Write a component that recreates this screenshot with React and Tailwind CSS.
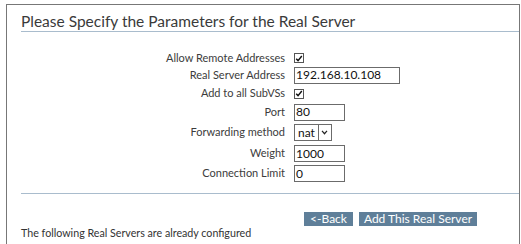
import React from "react";

function Check() {
  return (
    <span className="inline-flex h-[10px] w-[10px] items-center justify-center border border-[#555] bg-white">
      <svg viewBox="0 0 10 10" className="h-[9px] w-[9px]">
        <path d="M1.5 5.2 L3.8 7.6 L8.5 1.8" fill="none" stroke="#111" strokeWidth="1.8" />
      </svg>
    </span>
  );
}

function Row({ label, h, children }) {
  return (
    <div className={`flex items-center ${h}`}>
      <div className="w-[264px] text-right text-[11px] text-[#3c3c3c]">{label}</div>
      <div className="ml-[9px] flex items-center">{children}</div>
    </div>
  );
}

function Input({ value, w }) {
  return (
    <div className={`flex h-[17px] items-center border border-[#6b6b6b] bg-white pl-[1px] text-[12px] text-[#111] ${w}`}>
      {value}
    </div>
  );
}

export default function App() {
  return (
    <div className="h-[244px] w-[521px] overflow-hidden bg-white" style={{ fontFamily: 'Lato, "Noto Sans", sans-serif' }}>
      <div className="ml-[6px] mt-[4px] h-[260px] w-[514px] border-l border-r border-t border-[#777] pl-[14px]">
        <div className="border-b border-[#a9bccd] pb-[1px] pt-[7px] text-[15.5px] leading-[18px] text-[#3a3a3a]">
          Please Specify the Parameters for the Real Server
        </div>
        <div className="mt-[18px] flex flex-col">
          <Row label="Allow Remote Addresses" h="h-[16px]"><Check /></Row>
          <Row label="Real Server Address" h="h-[18px]"><Input value="192.168.10.108" w="w-[106px]" /></Row>
          <Row label="Add to all SubVSs" h="h-[19px]"><Check /></Row>
          <Row label="Port" h="h-[18px]"><Input value="80" w="w-[51px]" /></Row>
          <Row label="Forwarding method" h="h-[23px]">
            <div className="flex h-[17px] items-center border border-[#6b6b6b] bg-white text-[12px] text-[#111]">
              <span className="px-[3px]">nat</span>
              <span className="flex h-full w-[13px] items-center justify-center border-l border-[#6b6b6b]">
                <svg viewBox="0 0 8 6" className="h-[5px] w-[7px]"><path d="M1 1 L4 4.5 L7 1" fill="none" stroke="#222" strokeWidth="1.4" /></svg>
              </span>
            </div>
          </Row>
          <Row label="Weight" h="h-[19px]"><Input value="1000" w="w-[51px]" /></Row>
          <Row label="Connection Limit" h="h-[21px]"><Input value="0" w="w-[51px]" /></Row>
        </div>
        <div className="mt-[9px] border-t border-[#a9bccd]" />
        <div className="mt-[18px] flex gap-[6px] pl-[283px]">
          <div className="flex h-[14px] w-[49px] items-center justify-center bg-[#5f7f99] text-[12px] text-white">&lt;-Back</div>
          <div className="flex h-[14px] w-[118px] items-center justify-center bg-[#5f7f99] text-[12px] text-white">Add This Real Server</div>
        </div>
        <div className="text-[10.7px] leading-[14px] text-[#333]">The following Real Servers are already configured</div>
      </div>
    </div>
  );
}
